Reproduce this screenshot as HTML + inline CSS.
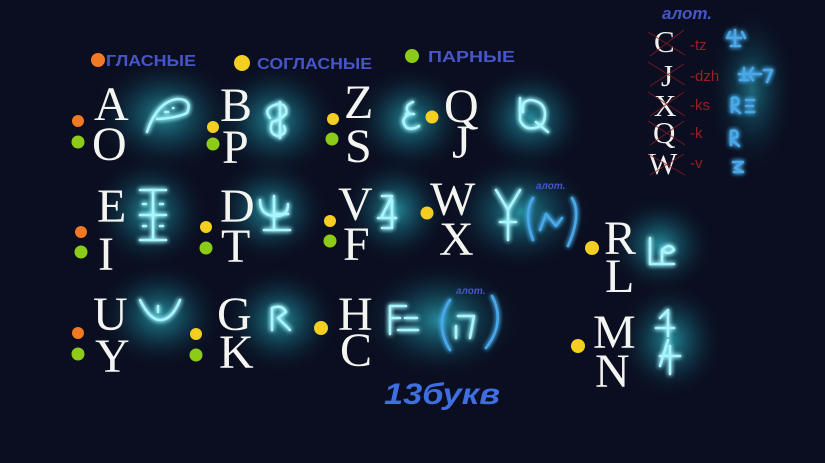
<!DOCTYPE html>
<html><head><meta charset="utf-8"><style>
html,body{margin:0;padding:0;background:#0a0e20;width:825px;height:463px;overflow:hidden}
svg{display:block}
.L{font-family:"Liberation Serif",serif;fill:#f4f4f0;font-size:48px}
.R{font-family:"Liberation Serif",serif;fill:#f0f0ee;font-size:31px}
.lg{font-family:"Liberation Sans","DejaVu Sans",sans-serif;fill:#4656c8;font-size:16px;font-weight:bold}
.g{fill:none;stroke:#a8f6ff;stroke-width:2.6;stroke-linecap:round;stroke-linejoin:round}
.gb{fill:none;stroke:#4aa8e8;stroke-width:2.6;stroke-linecap:round;stroke-linejoin:round}
.red{font-family:"Liberation Sans",sans-serif;fill:#9a1f24;font-size:15px}
</style></head><body>
<svg width="825" height="463" viewBox="0 0 825 463">
<defs>
<radialGradient id="h"><stop offset="0" stop-color="#2aa0ae" stop-opacity=".85"/><stop offset=".45" stop-color="#16687a" stop-opacity=".45"/><stop offset="1" stop-color="#0a0e20" stop-opacity="0"/></radialGradient>
<filter id="gl" x="-50%" y="-50%" width="200%" height="200%"><feGaussianBlur stdDeviation="2.5" result="b"/><feMerge><feMergeNode in="b"/><feMergeNode in="b"/><feMergeNode in="SourceGraphic"/></feMerge></filter>
</defs>
<rect width="825" height="463" fill="#0a0e20"/>
<g>
<ellipse cx="165" cy="115" rx="75" ry="60" fill="url(#h)"/>
<ellipse cx="275" cy="120" rx="65" ry="60" fill="url(#h)"/>
<ellipse cx="410" cy="120" rx="60" ry="55" fill="url(#h)"/>
<ellipse cx="530" cy="118" rx="60" ry="55" fill="url(#h)"/>
<ellipse cx="150" cy="212" rx="60" ry="60" fill="url(#h)"/>
<ellipse cx="270" cy="210" rx="60" ry="55" fill="url(#h)"/>
<ellipse cx="395" cy="210" rx="55" ry="55" fill="url(#h)"/>
<ellipse cx="520" cy="212" rx="75" ry="60" fill="url(#h)"/>
<ellipse cx="660" cy="245" rx="55" ry="50" fill="url(#h)"/>
<ellipse cx="160" cy="315" rx="65" ry="55" fill="url(#h)"/>
<ellipse cx="280" cy="320" rx="60" ry="55" fill="url(#h)"/>
<ellipse cx="440" cy="320" rx="85" ry="60" fill="url(#h)"/>
<ellipse cx="670" cy="340" rx="55" ry="60" fill="url(#h)"/>
<ellipse cx="752" cy="90" rx="45" ry="85" fill="url(#h)" opacity=".7"/>
</g>
<circle cx="98" cy="60" r="7" fill="#f07a24"/><text x="106" y="66" class="lg" textLength="90" lengthAdjust="spacingAndGlyphs">ГЛАСНЫЕ</text>
<circle cx="242" cy="63" r="8" fill="#f4cf22"/><text x="257" y="69" class="lg" textLength="115" lengthAdjust="spacingAndGlyphs">СОГЛАСНЫЕ</text>
<circle cx="412" cy="56" r="7" fill="#8ccc18"/><text x="428" y="62" class="lg" textLength="87" lengthAdjust="spacingAndGlyphs">ПАРНЫЕ</text>
<g>
<circle cx="78" cy="121" r="6" fill="#f07a24"/><circle cx="78" cy="142" r="6.5" fill="#8ccc18"/>
<circle cx="213" cy="127" r="6" fill="#f4cf22"/><circle cx="213" cy="144" r="6.5" fill="#8ccc18"/>
<circle cx="333" cy="119" r="6" fill="#f4cf22"/><circle cx="332" cy="139" r="6.5" fill="#8ccc18"/>
<circle cx="432" cy="117" r="6.5" fill="#f4cf22"/>
<circle cx="81" cy="232" r="6" fill="#f07a24"/><circle cx="81" cy="252" r="6.5" fill="#8ccc18"/>
<circle cx="206" cy="227" r="6" fill="#f4cf22"/><circle cx="206" cy="248" r="6.5" fill="#8ccc18"/>
<circle cx="330" cy="221" r="6" fill="#f4cf22"/><circle cx="330" cy="241" r="6.5" fill="#8ccc18"/>
<circle cx="427" cy="213" r="6.5" fill="#f4cf22"/>
<circle cx="592" cy="248" r="7" fill="#f4cf22"/>
<circle cx="78" cy="333" r="6" fill="#f07a24"/><circle cx="78" cy="354" r="6.5" fill="#8ccc18"/>
<circle cx="196" cy="334" r="6" fill="#f4cf22"/><circle cx="196" cy="355" r="6.5" fill="#8ccc18"/>
<circle cx="321" cy="328" r="7" fill="#f4cf22"/>
<circle cx="578" cy="346" r="7" fill="#f4cf22"/>
</g>
<g class="L">
<text x="94" y="120">A</text><text x="92" y="160">O</text>
<text x="220" y="121">B</text><text x="222" y="163">P</text>
<text x="344" y="118">Z</text><text x="345" y="162">S</text>
<text x="444" y="122">Q</text><text x="452" y="158">J</text>
<text x="97" y="222">E</text><text x="98" y="270">I</text>
<text x="220" y="222">D</text><text x="221" y="262">T</text>
<text x="338" y="220">V</text><text x="343" y="260">F</text>
<text x="430" y="215">W</text><text x="439" y="255">X</text>
<text x="604" y="254">R</text><text x="605" y="292">L</text>
<text x="93" y="330">U</text><text x="95" y="372">Y</text>
<text x="217" y="330">G</text><text x="219" y="368">K</text>
<text x="338" y="330">H</text><text x="340" y="366">C</text>
<text x="593" y="348">M</text><text x="595" y="387">N</text>
</g>
<g class="R">
<text x="654" y="52">C</text><text x="661" y="86">J</text><text x="654" y="116">X</text><text x="653" y="143">Q</text><text x="648" y="174">W</text>
</g>
<g stroke="#8a1e22" stroke-width="1" opacity=".8">
<path d="M648 32L685 55M650 56L684 30M648 62L685 85M650 86L684 64M648 92L685 116M650 116L684 92M648 121L685 145M650 145L684 121M648 154L685 175M650 175L684 154"/>
</g>
<g class="red">
<text x="690" y="50">-tz</text><text x="690" y="81">-dzh</text><text x="690" y="110">-ks</text><text x="690" y="138">-k</text><text x="690" y="168">-v</text>
</g>
<text x="662" y="19" class="lg" style="font-style:italic;font-size:17px">алот.</text>
<g class="gb" filter="url(#gl)" stroke="#5fb0f0">
<path d="M735 30v16M729 38h12M731 46h9M727 38l3-6M745 38l-3-6"/>
<path d="M744 68v12M739 74h10M740 80h8M753 80q-6-6 0-12M753 74h8M764 70h8l-5 12"/>
<path d="M732 112v-14q8-2 6 6l-6 2l8 7M746 100h8M746 106h7M746 112h8"/>
<path d="M731 145v-14q8-2 6 6l-6 2l8 7"/>
<path d="M733 162h10l-8 6l8 4h-9"/>
</g>
<g class="g" filter="url(#gl)">
<path d="M147 132q10-30 30-33q16 0 10 14q-10 5-30 6M165 112h3M173 108h.5"/>
<path d="M270 118q-8-10 8-14q10 0 8 10q-6 6-14 8q-4 12 6 14q10-2 6-10M280 102v36"/>
<path d="M413 102q-10 4-4 12q-10 6-2 14q6 2 12-2M406 114h8"/>
<path d="M520 98v22q4 10 15 8q10-2 10-14q0-12-14-14q-10 0-8 12M536 122l12 10"/>
<path d="M140 190h26M140 240h26M153 190v50M143 204h3M160 204h3M143 226h3M160 226h3M140 215h26"/>
<path d="M260 200q0 16 16 16q12 0 12-12M274 196v34M264 230h26M276 214h12"/>
<path d="M382 196h10l-10 20M378 218h18M392 200v28h-10"/>
<path d="M496 190l12 20l12-20M508 210v30M500 222h16"/>
<path d="M650 238v26h24M662 250q8-8 12 0q-6 6-12 0v12"/>
<path d="M140 300q10 20 20 20q12 0 20-20M158 306v6"/>
<path d="M272 330v-22q10-4 14 4l-8 6l12 12"/>
<path d="M390 306v28M390 306h16M390 318h10M405 318h12M398 330h20"/>
<path d="M458 316h16l-4 22M456 338v-12"/>
<path d="M660 318l8-8v26M656 328h18M668 340l-8 26M660 356h20M670 346v28"/>
</g>
<g class="gb" filter="url(#gl)">
<path d="M533 198q-10 16 0 42M572 198q10 16 -4 48M540 230l6-16l10 12l6-8"/>
<path d="M450 300q-16 24 0 50M492 296q14 26 -6 52"/>
</g>
<text x="536" y="189" class="lg" style="font-style:italic;font-size:10px">алот.</text>
<text x="456" y="294" class="lg" style="font-style:italic;font-size:10px">алот.</text>
<text x="384" y="404" class="lg" style="font-style:italic;font-size:30px;fill:#3e6ee0" textLength="116" lengthAdjust="spacingAndGlyphs">13букв</text>
</svg>
</body></html>
